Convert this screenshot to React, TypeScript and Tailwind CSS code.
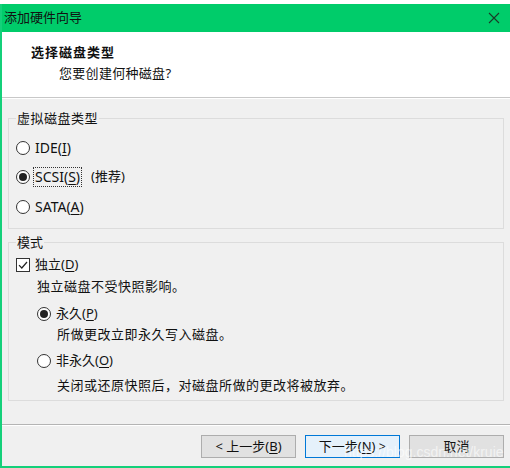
import { ReactNode } from 'react';

const cjk = '"Segoe UI", "Noto Sans", "Noto Sans CJK SC", sans-serif';

function Key({ children }: { children: ReactNode }) {
  return <span className="underline underline-offset-2">{children}</span>;
}

function Latin({ children }: { children: ReactNode }) {
  return <span className="text-[14px]">{children}</span>;
}

function Radio({ checked, label, focused }: { checked?: boolean; label: ReactNode; focused?: boolean }) {
  return (
    <div className="flex items-center gap-[4px]">
      <span className="flex h-[14px] w-[14px] items-center justify-center rounded-full border border-[#333] bg-white">
        {checked && <span className="h-[8px] w-[8px] rounded-full bg-[#222]" />}
      </span>
      <span className={focused ? 'outline-1 outline-dotted outline-[#333] px-[1px] leading-[18px]' : 'px-[1px]'}>{label}</span>
    </div>
  );
}

function Check({ label }: { label: ReactNode }) {
  return (
    <div className="flex items-center gap-[4px]">
      <span className="flex h-[14px] w-[14px] items-center justify-center border border-[#333] bg-white">
        <svg width="10" height="10" viewBox="0 0 10 10">
          <path d="M1 5.2 L3.8 8 L9 2" fill="none" stroke="#222" strokeWidth="1.2" />
        </svg>
      </span>
      <span className="px-[1px]">{label}</span>
    </div>
  );
}

function Button({ children, primary }: { children: ReactNode; primary?: boolean }) {
  return (
    <button
      className={
        'flex h-[23px] w-[95px] items-center justify-center border text-[13px] text-[#111] ' +
        (primary ? 'border-[#0078d7] bg-[#e5f1fb]' : 'border-[#adadad] bg-[#e1e1e1]')
      }
    >
      {children}
    </button>
  );
}

export default function App() {
  return (
    <div className="h-[468px] w-[510px] bg-white pt-[4px] text-[13px] text-[#111]" style={{ fontFamily: cjk }}>
      <div className="relative flex h-[464px] flex-col border-b-2 border-l-2 border-[#14d07a] bg-[#f0f0f0]">
        {/* title bar */}
        <div className="flex h-[28px] items-center justify-between bg-[#00cc6a] pl-[2px] pr-[10px]">
          <span className="text-[13px] text-[#111]">添加硬件向导</span>
          <svg width="12" height="12" viewBox="0 0 12 12">
            <path d="M1 1 L11 11 M11 1 L1 11" stroke="#1a3a28" strokeWidth="1.1" />
          </svg>
        </div>

        {/* header */}
        <div className="h-[66px] border-b border-[#c8c8c8] bg-white">
          <div className="pl-[29px] pt-[11px] text-[13px] font-bold tracking-[1px]">选择磁盘类型</div>
          <div className="pl-[57px] pt-[1px] tracking-[0.3px]">您要创建何种磁盘?</div>
        </div>

        <div className="border-t border-white px-[6px]">
          {/* disk type group */}
          <fieldset className="mt-[11px] h-[119px] border border-[#dcdcdc] pl-[7px]">
            <legend className="px-[1px] leading-[16px] tracking-[0.5px]">虚拟磁盘类型</legend>
            <div className="flex h-[30px] items-center pt-[14px]">
              <Radio label={<Latin>IDE(<Key>I</Key>)</Latin>} />
            </div>
            <div className="flex h-[30px] items-center pt-[12px]">
              <Radio checked focused label={<Latin>SCSI(<Key>S</Key>)</Latin>} />
              <span className="ml-[10px]">(推荐)</span>
            </div>
            <div className="flex h-[30px] items-center pt-[12px]">
              <Radio label={<Latin>SATA(<Key>A</Key>)</Latin>} />
            </div>
          </fieldset>

          {/* mode group */}
          <fieldset className="mt-[5px] h-[167px] border border-[#dcdcdc] pl-[7px]">
            <legend className="px-[1px] leading-[16px]">模式</legend>
            <div className="mt-[4px] flex h-[22px] items-center">
              <Check label={<>独立(<Key>D</Key>)</>} />
            </div>
            <div className="flex h-[22px] items-center pl-[21px] tracking-[0.5px]">独立磁盘不受快照影响。</div>
            <div className="mt-[4px] flex h-[24px] items-center pl-[21px]">
              <Radio checked label={<>永久(<Key>P</Key>)</>} />
            </div>
            <div className="flex h-[18px] items-center pl-[41px] tracking-[0.5px]">所做更改立即永久写入磁盘。</div>
            <div className="mt-[5px] flex h-[24px] items-center pl-[21px]">
              <Radio label={<>非永久(<Key>O</Key>)</>} />
            </div>
            <div className="mt-[3px] flex h-[20px] items-center pl-[41px] tracking-[0.5px]">
              关闭或还原快照后，对磁盘所做的更改将被放弃。
            </div>
          </fieldset>
        </div>

        {/* footer */}
        <div className="mt-auto border-t border-[#b4b4b4]">
          <div className="flex h-[41px] items-center justify-end gap-[9px] border-t border-white pr-[6px] pt-[1px]">
            <Button>&lt; 上一步(<Key>B</Key>)</Button>
            <Button primary>下一步(<Key>N</Key>) &gt;</Button>
            <Button>取消</Button>
          </div>
        </div>

        <span
          className="pointer-events-none absolute left-[342px] top-[438px] text-[14px] text-white/60"
          style={{ fontFamily: '"Liberation Sans", Arial, sans-serif' }}
        >
          https://blog.csdn.net/kruie
        </span>
      </div>
    </div>
  );
}
